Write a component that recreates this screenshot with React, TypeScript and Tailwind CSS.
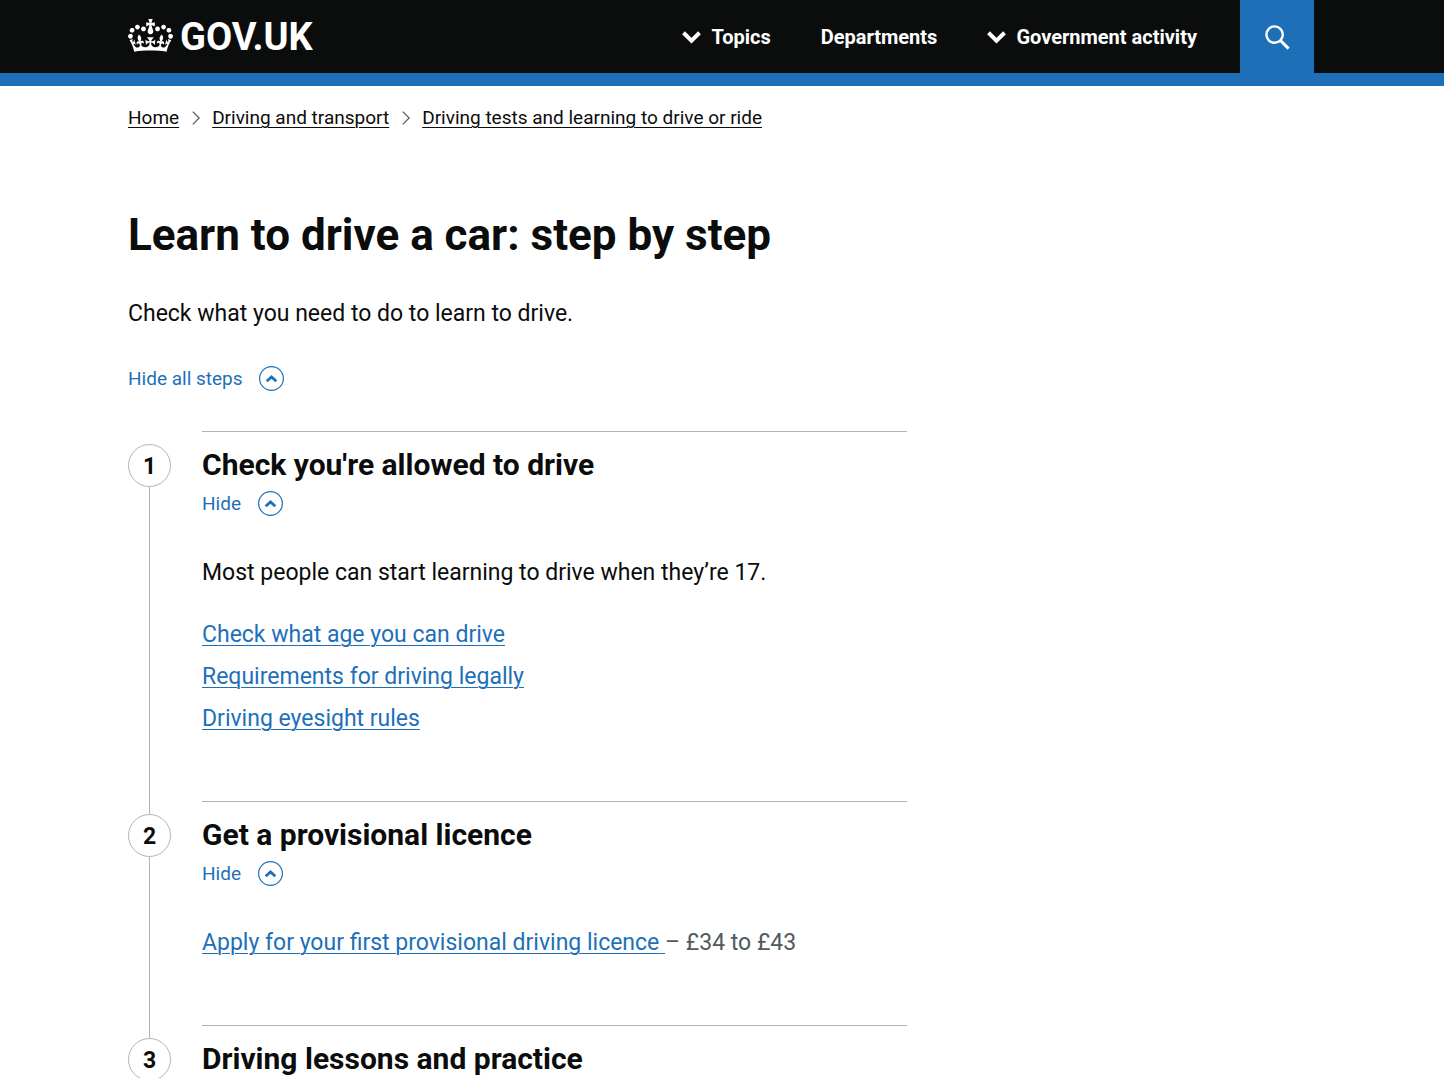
import React, { useState } from 'react';

type StepLink = { text: string; cost?: string };
type Step = { title: string; intro?: string; links: StepLink[] };

const CRUMBS = ['Home', 'Driving and transport', 'Driving tests and learning to drive or ride'];

const STEPS: Step[] = [
  {
    title: "Check you're allowed to drive",
    intro: 'Most people can start learning to drive when they’re 17.',
    links: [
      { text: 'Check what age you can drive' },
      { text: 'Requirements for driving legally' },
      { text: 'Driving eyesight rules' },
    ],
  },
  {
    title: 'Get a provisional licence',
    links: [{ text: 'Apply for your first provisional driving licence', cost: '£34 to £43' }],
  },
  { title: 'Driving lessons and practice', links: [] },
];

function Crown() {
  return (
    <svg viewBox="0 0 132 97" className="mb-0.5 h-[33px] w-[45px] shrink-0" fill="currentColor" aria-hidden="true">
      <path d="M25 30.2c3.5 1.5 7.7-.2 9.1-3.7 1.5-3.6-.2-7.8-3.9-9.2-3.6-1.4-7.6.3-9.1 3.9-1.4 3.5.3 7.5 3.9 9zM9 39.5c3.6 1.5 7.8-.2 9.2-3.7 1.5-3.6-.2-7.8-3.9-9.1-3.6-1.5-7.6.2-9.1 3.8-1.4 3.5.3 7.5 3.8 9zM4.4 57.2c3.5 1.5 7.7-.2 9.1-3.8 1.5-3.6-.2-7.7-3.9-9.1-3.5-1.5-7.6.3-9.1 3.8-1.4 3.5.3 7.6 3.9 9.1zm38.3-21.4c3.5 1.5 7.7-.2 9.1-3.8 1.5-3.6-.2-7.7-3.9-9.1-3.6-1.5-7.6.3-9.1 3.8-1.3 3.6.4 7.7 3.9 9.1zm64.4-5.6c-3.6 1.5-7.8-.2-9.1-3.7-1.5-3.6.2-7.8 3.8-9.2 3.6-1.4 7.7.3 9.2 3.9 1.3 3.5-.4 7.5-3.9 9zm15.9 9.3c-3.6 1.5-7.7-.2-9.1-3.7-1.5-3.6.2-7.8 3.7-9.1 3.6-1.5 7.7.2 9.2 3.8 1.5 3.5-.3 7.5-3.8 9zm4.7 17.7c-3.6 1.5-7.8-.2-9.2-3.8-1.5-3.6.2-7.7 3.9-9.1 3.6-1.5 7.7.3 9.2 3.8 1.3 3.5-.4 7.6-3.9 9.1zM89.3 35.8c-3.6 1.5-7.8-.2-9.2-3.8-1.4-3.6.2-7.7 3.9-9.1 3.6-1.5 7.7.3 9.2 3.8 1.4 3.6-.3 7.7-3.9 9.1zM69.7 17.7l8.9 4.7V9.3l-8.9 2.8c-.2-.3-.5-.6-.9-.9L72.4 0H59.6l3.5 11.2c-.3.3-.6.5-.9.9l-8.8-2.8v13.1l8.8-4.7c.3.3.6.7.9.9l-5 15.4v.1c-.2.8-.4 1.6-.4 2.4 0 4.1 3.1 7.5 7 8.1h.2c.3 0 .7.1 1 .1.4 0 .7 0 1-.1h.2c4-.6 7.1-4.1 7.1-8.1 0-.8-.1-1.7-.4-2.4V34l-5.1-15.4c.4-.2.7-.6 1-.9zM66 92.8c16.9 0 32.8 1.1 47.1 3.2 4-16.9 8.9-26.7 14-33.5l-9.6-3.4c1 4.9 1.1 7.2 0 10.2-1.5-1.4-3-4.3-4.2-8.7L108.6 76c2.8-2 5-3.2 7.5-3.3-4.4 9.4-10 11.9-13.6 11.2-4.3-.8-6.3-4.6-5.6-7.9 1-4.7 5.7-5.9 8-.5 4.3-8.7-3-11.4-7.6-8.8 7.1-7.2 7.9-13.5 2.1-21.1-8 6.1-8.1 12.3-4.5 20.8-4.7-5.4-12.1-2.5-9.5 6.2 3.4-5.2 7.9-2 7.2 3.1-.6 4.3-6.4 7.8-13.5 7.2-10.3-.9-10.9-8-11.2-13.8 2.5-.5 7.1 1.8 11 7.3L80.2 60c-4.1 4.4-8 5.3-12.3 5.4 1.4-4.4 8-11.6 8-11.6H55.5s6.4 7.2 7.9 11.6c-4.2-.1-8-1-12.3-5.4l1.4 16.4c3.9-5.5 8.5-7.7 10.9-7.3-.3 5.8-.9 12.8-11.1 13.8-7.2.6-12.9-2.9-13.5-7.2-.7-5 3.8-8.3 7.1-3.1 2.7-8.7-4.6-11.6-9.4-6.2 3.7-8.5 3.6-14.7-4.6-20.8-5.8 7.6-5 13.9 2.2 21.1-4.7-2.6-11.9.1-7.7 8.8 2.3-5.5 7.1-4.2 8.1.5.7 3.3-1.3 7.1-5.7 7.9-3.5.7-9-1.8-13.5-11.2 2.5.1 4.7 1.3 7.5 3.3l-4.7-15.4c-1.2 4.4-2.7 7.2-4.3 8.7-1.1-3-.9-5.3 0-10.2l-9.5 3.4c5 6.9 9.9 16.7 14 33.5 14.8-2.1 30.8-3.2 47.7-3.2z" />
    </svg>
  );
}

function NavChevron() {
  return (
    <svg viewBox="0 0 19 13" className="mt-0.5 h-[13px] w-[19px]" fill="none" stroke="currentColor" strokeWidth="4" aria-hidden="true">
      <path d="M1.5 1.8 9.5 9.6 17.5 1.8" />
    </svg>
  );
}

function CrumbChevron() {
  return (
    <svg viewBox="0 0 8 14" className="h-3.5 w-2" fill="none" stroke="#505a5f" strokeWidth="1.3" aria-hidden="true">
      <path d="M.8.6 7.2 7 .8 13.4" />
    </svg>
  );
}

function ToggleIcon({ open }: { open: boolean }) {
  return (
    <svg viewBox="0 0 25 25" className={open ? 'size-[25px]' : 'size-[25px] rotate-180'} fill="none" stroke="currentColor" aria-hidden="true">
      <circle cx="12.5" cy="12.5" r="11.9" strokeWidth="1.2" />
      <path d="M7.7 15.3 12.5 10.9 17.3 15.3" strokeWidth="2.7" />
    </svg>
  );
}

function Toggle({ label, open, onClick }: { label: string; open: boolean; onClick: () => void }) {
  return (
    <button type="button" aria-expanded={open} onClick={onClick} className="flex cursor-pointer items-center gap-4 text-[19px] leading-[25px] text-[#1d70b8]">
      <span className="min-w-10 text-left">{label}</span>
      <ToggleIcon open={open} />
    </button>
  );
}

function Header() {
  return (
    <header className="border-b-[13px] border-[#1d70b8] bg-[#0b0c0c] text-white">
      <div className="mx-auto flex min-h-[73px] max-w-[1188px] items-stretch justify-between">
        <a href="#" className="flex items-center gap-[7px] text-[38px] leading-none font-bold">
          <Crown />
          GOV.UK
        </a>
        <nav aria-label="Main" className="mr-0.5 flex items-stretch gap-[43px]">
          <div className="flex items-center gap-[50px] text-xl font-bold">
            <button type="button" className="flex cursor-pointer items-center gap-2.5">
              <NavChevron />
              Topics
            </button>
            <a href="#">Departments</a>
            <button type="button" className="flex cursor-pointer items-center gap-2.5">
              <NavChevron />
              Government activity
            </button>
          </div>
          <button type="button" aria-label="Search" className="flex w-[74px] cursor-pointer items-center justify-center bg-[#1d70b8] pt-0.5">
            <svg viewBox="0 0 25 25" className="size-[25px]" fill="none" stroke="currentColor" aria-hidden="true">
              <circle cx="9.6" cy="9.6" r="8.2" strokeWidth="2.4" />
              <path d="M15.2 15.2 23.6 23.6" strokeWidth="3" />
            </svg>
          </button>
        </nav>
      </div>
    </header>
  );
}

function StepItem({ step, number, last, open, onToggle }: { step: Step; number: number; last: boolean; open: boolean; onToggle: () => void }) {
  return (
    <li className="flex gap-[31px]">
      <div className="flex w-[43px] shrink-0 flex-col items-center">
        <span className={number === 1 ? 'h-[13px] w-px' : 'h-[13px] w-px bg-[#b1b4b6]'} />
        <span className="flex size-[43px] items-center justify-center rounded-full border border-[#b1b4b6] pt-0.5 text-[23px] leading-6 font-bold">{number}</span>
        {!last && <span className="w-px grow bg-[#b1b4b6]" />}
      </div>
      <div className="grow border-t border-[#b1b4b6] pt-[15px]">
        <h2 className="text-[30px] leading-9 font-bold">{step.title}</h2>
        {step.links.length > 0 && (
          <div className="pt-2 pb-[67px]">
            <Toggle label={open ? 'Hide' : 'Show'} open={open} onClick={onToggle} />
            {open && (
              <div className="flex flex-col gap-8 pt-[42px] text-[23px] leading-[30px]">
                {step.intro && <p>{step.intro}</p>}
                <ul className="flex flex-col gap-3">
                  {step.links.map((link) => (
                    <li key={link.text} className="text-[#505a5f]">
                      <a href="#" className="text-[#1d70b8] underline decoration-1 underline-offset-[3px]">
                        {link.text}
                        {link.cost && ' '}
                      </a>
                      {link.cost && `– ${link.cost}`}
                    </li>
                  ))}
                </ul>
              </div>
            )}
          </div>
        )}
      </div>
    </li>
  );
}

export default function App() {
  const [open, setOpen] = useState([true, true, true]);
  const allOpen = open.every(Boolean);

  return (
    <div className="bg-white font-['Roboto',sans-serif] text-[#0b0c0c]">
      <Header />
      <div className="mx-auto max-w-[1188px]">
        <nav aria-label="Breadcrumb" className="pt-5">
          <ol className="flex flex-wrap items-center gap-[13px] text-[19px] leading-6">
            {CRUMBS.map((crumb, i) => (
              <li key={crumb} className="flex items-center gap-3">
                {i > 0 && <CrumbChevron />}
                <a href="#" className="underline decoration-1 underline-offset-[3px]">{crumb}</a>
              </li>
            ))}
          </ol>
        </nav>
        <main className="max-w-[779px] pt-20">
          <h1 className="text-[44px] leading-[50px] font-bold">Learn to drive a car: step by step</h1>
          <p className="pt-[39px] text-[23px] leading-[30px]">Check what you need to do to learn to drive.</p>
          <div className="pt-[37px] pb-10">
            <Toggle label={allOpen ? 'Hide all steps' : 'Show all steps'} open={allOpen} onClick={() => setOpen(open.map(() => !allOpen))} />
          </div>
          <ol>
            {STEPS.map((step, i) => (
              <StepItem
                key={step.title}
                step={step}
                number={i + 1}
                last={i === STEPS.length - 1}
                open={open[i]}
                onToggle={() => setOpen(open.map((value, j) => (j === i ? !value : value)))}
              />
            ))}
          </ol>
        </main>
      </div>
    </div>
  );
}
